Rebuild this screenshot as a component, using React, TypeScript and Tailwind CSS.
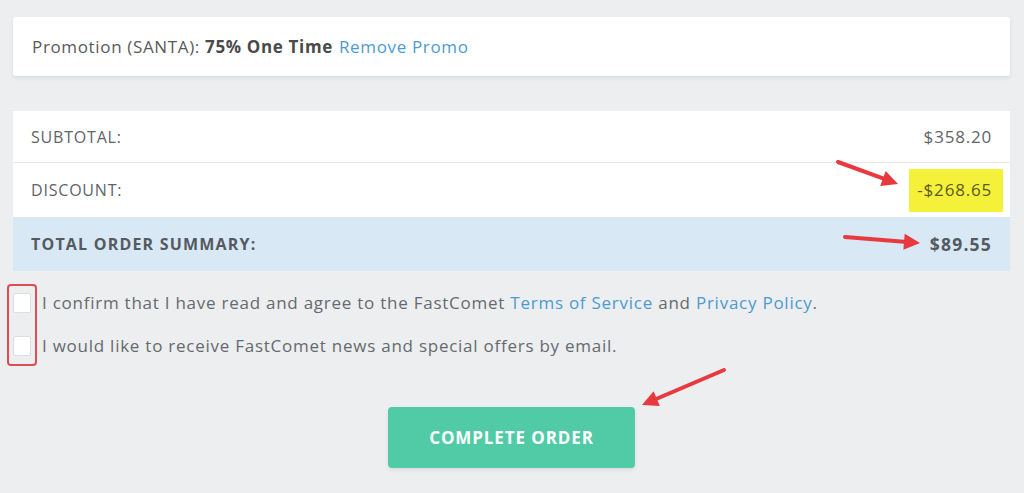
import React from "react";

function Arrow({ x1, y1, x2, y2 }: { x1: number; y1: number; x2: number; y2: number }) {
  const dx = x2 - x1;
  const dy = y2 - y1;
  const len = Math.sqrt(dx * dx + dy * dy);
  const ux = dx / len;
  const uy = dy / len;
  const hl = 16;
  const hw = 8;
  const bx = x2 - ux * hl;
  const by = y2 - uy * hl;
  const px = -uy;
  const py = ux;
  return (
    <g>
      <line x1={x1} y1={y1} x2={bx} y2={by} stroke="#e8393f" strokeWidth={4} strokeLinecap="round" />
      <polygon
        points={`${x2},${y2} ${bx + px * hw},${by + py * hw} ${bx - px * hw},${by - py * hw}`}
        fill="#e8393f"
      />
    </g>
  );
}

export default function App() {
  return (
    <div
      className="relative w-[1024px] h-[493px] bg-[#eceef0] overflow-hidden pl-[13px] pr-[14px] pt-[17px]"
      style={{ fontFamily: "'Open Sans', 'Noto Sans', sans-serif" }}
    >
      <div className="h-[59px] bg-white rounded-[3px] shadow-[0_2px_4px_rgba(0,0,0,0.08)] flex items-center pl-[19px] text-[17px] tracking-[0.65px] text-[#5a5a5a]">
        <span>Promotion (SANTA):&nbsp;</span>
        <span className="font-bold text-[#4a4a4a]">75% One Time</span>
        <span className="ml-[6px] text-[#4d9ad3]">Remove Promo</span>
      </div>

      <div className="mt-[35px] bg-white">
        <div className="h-[52px] flex items-center justify-between pl-[18px] pr-[18px] border-b border-[#e6e8ea] text-[16px] tracking-[0.8px] text-[#606468]">
          <span>SUBTOTAL:</span>
          <span className="text-[17px]">$358.20</span>
        </div>
        <div className="h-[54px] flex items-center justify-between pl-[18px] pr-[18px] text-[16px] tracking-[0.8px] text-[#606468]">
          <span>DISCOUNT:</span>
          <span className="relative text-[17px] text-[#5a5a20]">
            <span className="absolute -left-[8px] -right-[11px] -top-[8px] -bottom-[9px] bg-[#f5f03a]" />
            <span className="relative">-$268.65</span>
          </span>
        </div>
        <div className="h-[54px] flex items-center justify-between pl-[18px] pr-[18px] bg-[#d9e8f5] text-[16px] tracking-[1.2px] font-bold text-[#555a60]">
          <span>TOTAL ORDER SUMMARY:</span>
          <span className="text-[17.5px]">$89.55</span>
        </div>
      </div>

      <div className="relative mt-[22px] flex flex-col gap-[23px] text-[17px] tracking-[0.75px] text-[#666a6e]">
        <div className="absolute -left-[6px] -top-[9px] w-[30px] h-[82px] border-2 border-[#e14b52] rounded-[4px]" />
        <label className="flex items-center h-[20px]">
          <span className="w-[18px] h-[20px] bg-white border border-[#dcdfe2] rounded-[2px] shrink-0" />
          <span className="ml-[11px]">
            I confirm that I have read and agree to the FastComet{" "}
            <span className="text-[#4d9ad3]">Terms of Service</span> and{" "}
            <span className="text-[#4d9ad3]">Privacy Policy</span>.
          </span>
        </label>
        <label className="flex items-center h-[20px]">
          <span className="w-[18px] h-[20px] bg-white border border-[#dcdfe2] rounded-[2px] shrink-0" />
          <span className="ml-[11px]">I would like to receive FastComet news and special offers by email.</span>
        </label>
      </div>

      <div className="flex justify-center mt-[51px]">
        <button className="w-[247px] h-[61px] rounded-[4px] bg-[#50cba6] text-white font-bold text-[17px] tracking-[0.9px] shadow-[0_2px_4px_rgba(0,0,0,0.08)]">
          COMPLETE ORDER
        </button>
      </div>

      <svg className="absolute left-0 top-0 pointer-events-none" width={1024} height={493}>
        <Arrow x1={838} y1={162} x2={898} y2={184} />
        <Arrow x1={845} y1={237} x2={920} y2={243} />
        <Arrow x1={724} y1={370} x2={642} y2={405} />
      </svg>
    </div>
  );
}
